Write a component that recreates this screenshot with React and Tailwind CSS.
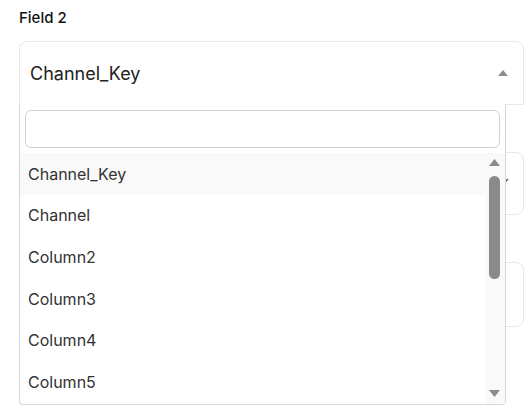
const options = ["Channel_Key", "Channel", "Column2", "Column3", "Column4", "Column5"];

function Box({ value, open, children, h }) {
  return (
    <div
      className={
        open
          ? "flex items-center rounded-t-lg border border-[#e6e8eb] bg-white pl-[10px] pr-[14px]"
          : "flex items-center rounded-lg border border-[#e6e8eb] bg-white pl-[10px] pr-[14px]"
      }
      style={{ height: h }}
    >
      <span className="flex-1 text-[18px] text-[#222]">{value}</span>
      {children}
    </div>
  );
}

export default function App() {
  return (
    <div className="relative h-[420px] w-[526px] overflow-hidden bg-white pl-[19px] pr-[2px] pt-[8px] font-['Inter','Liberation_Sans',sans-serif]">
      <div className="flex flex-col">
        <p className="text-[15px] font-medium leading-[20px] text-[#111]">Field 2</p>
        <div className="mt-[13px]">
          <Box value="Channel_Key" open h={64}>
            <svg width="10" height="6" viewBox="0 0 10 6" className="mr-[1px]">
              <path d="M0 6 L5 0 L10 6 Z" fill="#8c8c8c" />
            </svg>
          </Box>
        </div>
        <div className="mt-[47px]">
          <Box value="" h={63}>
            <svg width="12" height="8" viewBox="0 0 12 8" fill="none" stroke="#555" strokeWidth="1.5" className="-mt-[4px]">
              <path d="M1 1 L6 6 L11 1" />
            </svg>
          </Box>
        </div>
        <div className="mt-[47px]">
          <Box value="" h={65} />
        </div>
      </div>

      {/* dropdown menu */}
      <div className="absolute left-[19px] top-[104px] flex h-[301px] w-[487px] flex-col rounded-b-[4px] border-x border-b border-[#d3d7de] bg-white">
        <div className="px-[5px] pt-[6px] pb-[5px]">
          <input className="h-[38px] w-[475px] rounded-[6px] border border-[#ccd1d9] bg-white outline-none" />
        </div>
        <div className="flex flex-1">
          <ul className="flex-1">
            {options.map((o, i) => (
              <li
                key={o}
                className={
                  i === 0
                    ? "flex h-[41.6px] items-center bg-[#f9f9f9] pl-[8px] text-[16px] text-[#333]"
                    : "flex h-[41.6px] items-center pl-[8px] text-[16px] text-[#333]"
                }
              >
                {o}
              </li>
            ))}
          </ul>
          <div className="flex w-[19px] flex-col items-center bg-[#f9f9f9] pb-[7px] pt-[6px] pr-[2px]">
            <svg width="11" height="7" viewBox="0 0 11 7">
              <path d="M0 7 L5.5 0 L11 7 Z" fill="#8a8a8a" />
            </svg>
            <div className="mt-[10px] h-[103px] w-[11px] rounded-full bg-[#8a8a8a]" />
            <div className="flex-1" />
            <svg width="11" height="7" viewBox="0 0 11 7">
              <path d="M0 0 L11 0 L5.5 7 Z" fill="#8a8a8a" />
            </svg>
          </div>
        </div>
      </div>
    </div>
  );
}
